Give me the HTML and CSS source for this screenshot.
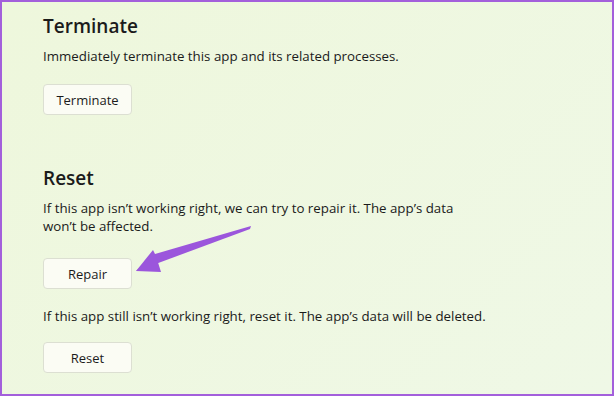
FILE: index.html
```html
<!DOCTYPE html>
<html lang="en">
<head>
    <meta charset="UTF-8">
    <title>App settings</title>
    <link rel="stylesheet" href="styles.css">
</head>
<body>
<div class="frame">
    <div class="section">
        <h2 class="section_title">Terminate</h2>
        <p class="section_desc">Immediately terminate this app and its related processes.</p>
        <button class="btn">Terminate</button>
    </div>

    <div class="section section_reset">
        <h2 class="section_title">Reset</h2>
        <p class="section_desc desc_narrow">If this app isn’t working right, we can try to repair it. The app’s data won’t be affected.</p>
        <button class="btn btn_repair">Repair</button>
        <p class="section_desc desc_after">If this app still isn’t working right, reset it. The app’s data will be deleted.</p>
        <button class="btn btn_reset">Reset</button>
    </div>

    <!--指向修复按钮的箭头-->
    <svg class="arrow" width="614" height="396" viewBox="0 0 614 396">
        <path d="M251 226 L250 229 L161 262 L136 271 L155 254 Z" fill="#9b56dc"/>
        <path d="M136 271 L153 250 L156 256 L161 272 Z" fill="#9b56dc"/>
    </svg>
</div>
</body>
</html>
```

FILE: styles.css
```css
* {
    margin: 0;
    padding: 0;
    box-sizing: border-box;
}

body {
    width: 614px;
    height: 396px;
    overflow: hidden;
    font-family: "Open Sans", "Noto Sans", sans-serif;
    color: #1b1b1b;
}

.frame {
    position: relative;
    width: 614px;
    height: 396px;
    border: 2px solid #a35fdb;
    background: linear-gradient(135deg, #eef7dc, #eff8e6);
    padding: 11px 0 0 41px;
}

.section_title {
    font-size: 19px;
    font-weight: 600;
    line-height: 26px;
}

.section_desc {
    font-size: 13.3px;
    line-height: 18px;
    margin-top: 8px;
}

.desc_narrow {
    max-width: 440px;
}

.btn {
    display: block;
    width: 89px;
    height: 31px;
    margin-top: 19px;
    font-family: inherit;
    font-size: 13px;
    color: #1b1b1b;
    background-color: #fbfcf4;
    border: 1px solid #dcdfd2;
    border-radius: 4px;
}

.section_reset {
    margin-top: 50px;
}

.btn_repair {
    margin-top: 23px;
}

.desc_after {
    margin-top: 18px;
}

.btn_reset {
    margin-top: 17px;
}

.arrow {
    position: absolute;
    left: -2px;
    top: -2px;
}
```
